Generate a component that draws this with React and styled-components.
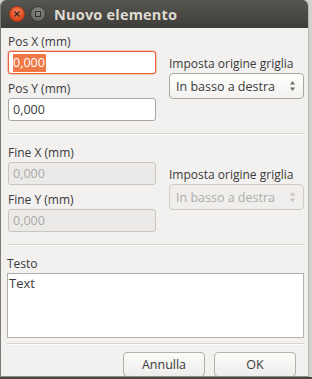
import React from 'react'
import styled, { createGlobalStyle } from 'styled-components'

const GlobalStyle = createGlobalStyle`
  html, body {
    margin: 0;
    padding: 0;
  }
  body {
    font-family: "Open Sans", "Liberation Sans", sans-serif;
    background: #4b4640;
  }
`

const Desktop = styled.div`
  width: 312px;
  height: 379px;
  background: linear-gradient(#d4d2cf 0 377px, #4b4640 377px);
  overflow: hidden;
`

const Window = styled.div`
  width: 309px;
  height: 377px;
  box-sizing: border-box;
  background: #f2f1f0;
  border-left: 1px solid #7c7a76;
  border-right: 1px solid #b9b7b3;
  border-bottom: 1px solid #8d8b87;
  border-radius: 6px 6px 0 0;
  overflow: hidden;
  display: flex;
  flex-direction: column;
`

const TitleBar = styled.div`
  height: 28px;
  flex-shrink: 0;
  background: linear-gradient(#57554f, #3e3d39);
  display: flex;
  align-items: center;
  padding-left: 8px;
  column-gap: 5px;
`

const WinButton = styled.div`
  width: 14px;
  height: 14px;
  border-radius: 50%;
  background: ${p => p.close
    ? 'radial-gradient(circle at 50% 35%, #f5845a, #e0461c 70%)'
    : 'radial-gradient(circle at 50% 35%, #8f8d88, #6b6964 70%)'};
  border: 1px solid ${p => p.close ? '#a8391a' : '#3a3935'};
  display: flex;
  align-items: center;
  justify-content: center;
`

const Title = styled.div`
  margin-left: 3px;
  color: #dfdbd2;
  font-weight: bold;
  font-size: 14.5px;
  letter-spacing: 0.2px;
`

const Body = styled.div`
  flex: 1;
  padding: 6px 4px 0 6px;
  display: flex;
  flex-direction: column;
`

const Section = styled.div`
  display: grid;
  grid-template-columns: 148px 135px;
  column-gap: 13px;
  align-items: center;
  padding-left: 1px;
`

const Column = styled.div`
  display: flex;
  flex-direction: column;
`

const Label = styled.div`
  font-size: 12px;
  line-height: 16px;
  color: #3a3a3a;
  margin-bottom: 1px;
  margin-top: ${p => p.gap || 0}px;
`

const Input = styled.div`
  height: 23px;
  box-sizing: border-box;
  border: 1px solid ${p => p.focused ? '#e9643a' : p.disabled ? '#c9c6c1' : '#a9a5a0'};
  box-shadow: ${p => p.focused ? '0 0 0 0.5px #f09a78' : 'none'};
  border-radius: 3px;
  background: ${p => p.disabled ? '#ebeae8' : '#ffffff'};
  color: ${p => p.disabled ? '#acaaa6' : '#3a3a3a'};
  font-size: 12.5px;
  display: flex;
  align-items: center;
  padding-left: 4px;
`

const Selected = styled.span`
  background: #f07746;
  color: #ffffff;
  line-height: 18px;
  padding: 0 1px 0 0;
`

const Combo = styled.div`
  height: 26px;
  box-sizing: border-box;
  border: 1px solid ${p => p.disabled ? '#d0cdc8' : '#aaa6a1'};
  border-radius: 4px;
  background: ${p => p.disabled ? '#efeeec' : 'linear-gradient(#fdfdfc, #f3f2f1)'};
  color: ${p => p.disabled ? '#aeaca8' : '#3a3a3a'};
  font-size: 12.5px;
  display: flex;
  align-items: center;
  justify-content: space-between;
  padding: 0 7px 0 6px;
`

const Arrows = styled.svg`
  width: 7px;
  height: 12px;
  fill: ${p => p.disabled ? '#c4c1bc' : '#6e6b66'};
`

const Separator = styled.div`
  height: 1px;
  background: #d8d4cf;
  border-bottom: 1px solid #ffffff;
  margin: ${p => p.m};
`

const TextArea = styled.div`
  height: 65px;
  box-sizing: border-box;
  border: 1px solid #b3afaa;
  background: #ffffff;
  color: #3a3a3a;
  font-size: 13px;
  line-height: 17px;
  padding: 1px 1px;
`

const Footer = styled.div`
  display: flex;
  justify-content: flex-end;
  column-gap: 9px;
  padding-right: 8px;
`

const Button = styled.div`
  width: 82px;
  height: 25px;
  box-sizing: border-box;
  border: 1px solid #b4b0ab;
  border-radius: 4px;
  background: linear-gradient(#fbfbfa, #eeedeb);
  color: #3a3a3a;
  font-size: 12.5px;
  display: flex;
  align-items: center;
  justify-content: center;
`

function Spin({ disabled }) {
  return (
    <Arrows viewBox="0 0 7 12" disabled={disabled}>
      <path d="M3.5 1 L6 4.5 L1 4.5 Z" />
      <path d="M3.5 11 L6 7.5 L1 7.5 Z" />
    </Arrows>
  )
}

function CoordBlock({ xLabel, yLabel, disabled }) {
  return (
    <Section>
      <Column>
        <Label>{xLabel}</Label>
        <Input focused={!disabled} disabled={disabled}>
          {disabled ? '0,000' : <Selected>0,000</Selected>}
        </Input>
        <Label gap={7}>{yLabel}</Label>
        <Input disabled={disabled}>0,000</Input>
      </Column>
      <Column>
        <Label>Imposta origine griglia</Label>
        <Combo disabled={disabled}>
          <span>In basso a destra</span>
          <Spin disabled={disabled} />
        </Combo>
      </Column>
    </Section>
  )
}

export default function App() {
  return (
    <>
      <GlobalStyle />
      <Desktop>
        <Window>
          <TitleBar>
            <WinButton close>
              <svg width="6" height="6" viewBox="0 0 6 6">
                <path d="M0.5 0.5 L5.5 5.5 M5.5 0.5 L0.5 5.5" stroke="#3a2a22" strokeWidth="1.3" />
              </svg>
            </WinButton>
            <WinButton>
              <svg width="6" height="6" viewBox="0 0 6 6">
                <rect x="0.5" y="0.5" width="5" height="5" fill="none" stroke="#2f2e2b" strokeWidth="1" />
              </svg>
            </WinButton>
            <Title>Nuovo elemento</Title>
          </TitleBar>
          <Body>
            <CoordBlock xLabel="Pos X (mm)" yLabel="Pos Y (mm)" />
            <Separator m="12px 0 10px" />
            <CoordBlock xLabel="Fine X (mm)" yLabel="Fine Y (mm)" disabled />
            <Separator m="12px 0 10px" />
            <Label>Testo</Label>
            <TextArea>Text</TextArea>
            <Separator m="5px 0 7px" />
            <Footer>
              <Button>Annulla</Button>
              <Button>OK</Button>
            </Footer>
          </Body>
        </Window>
      </Desktop>
    </>
  )
}
